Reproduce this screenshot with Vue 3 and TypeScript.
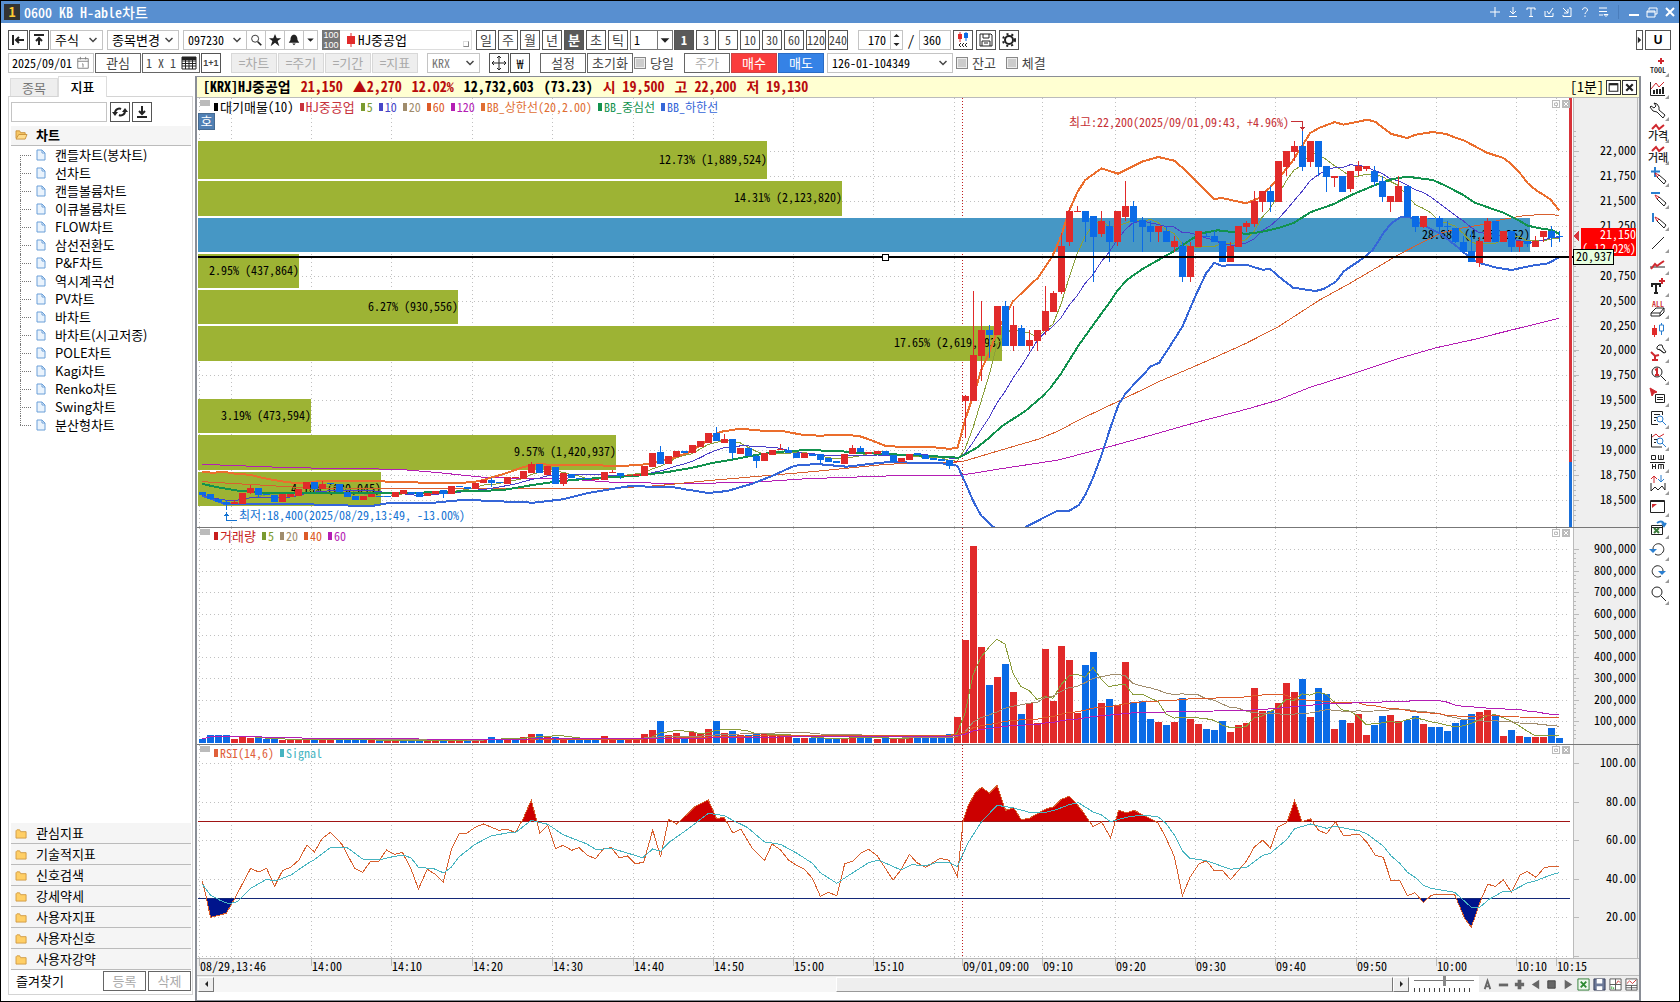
<script setup lang="ts">
import { ref } from 'vue'

type Dir = 'r' | 'b'
type Candle = [Dir, number, number, number?, number?]
type Pt = [number, number]
interface Shape { d: string; s?: string; f?: string; w?: number }
interface Tool { name: string; shapes: Shape[]; text?: string; ty?: number; ts?: number; tc?: string }

const UP = '#e12a2a'
const DOWN = '#0b6be6'
const INK = '#222'
const RED = '#d0282e'
const BLUE = '#2a7fd0'

const x0 = 202
const step = 8.03
const cx = (i: number) => Math.round(x0 + step * i)

/* Candle levels are kept in thirds of a pixel: direction, body top, body bottom, high, low. */
const friday: Candle[] = [
  ['b', 305, 315], ['b', 312, 328], ['b', 326, 337], ['b', 336, 343, 330, 360], ['r', 337, 343, 331], ['r', 310, 343],
  ['r', 294, 308, 285, 313], ['b', 294, 315, 294, 325], ['b', 312, 315], ['b', 315, 335], ['r', 312, 335], ['r', 312, 322],
  ['r', 298, 317], ['r', 276, 298], ['b', 276, 298, 276, 305], ['r', 282, 297, 274], ['b', 280, 283], ['b', 281, 305],
  ['b', 305, 320], ['b', 318, 330], ['r', 318, 330], ['r', 312, 320], ['b', 317, 320], ['b', 319, 322], ['r', 305, 320],
  ['r', 300, 312], ['b', 305, 312], ['b', 307, 320], ['r', 310, 318], ['r', 303, 312], ['b', 300, 312, 300, 323],
  ['r', 289, 312], ['b', 289, 292], ['b', 290, 297], ['r', 278, 297], ['r', 271, 278], ['b', 270, 280, 264, 290],
  ['b', 277, 280], ['r', 262, 282], ['r', 262, 265], ['r', 243, 266], ['r', 222, 248, 215], ['b', 222, 250],
  ['r', 228, 255], ['b', 230, 282], ['r', 250, 282, 250, 288], ['b', 252, 264], ['b', 263, 266], ['b', 265, 268],
  ['r', 267, 270], ['r', 247, 270], ['r', 246, 250, 240], ['b', 248, 258, 248, 268], ['r', 255, 258], ['r', 253, 258],
  ['r', 228, 258], ['r', 189, 230], ['b', 187, 222, 168], ['r', 198, 222], ['r', 183, 200], ['b', 183, 189],
  ['r', 165, 189], ['r', 153, 171], ['r', 129, 158], ['b', 129, 153, 111], ['r', 147, 158, 132],
  ['b', 147, 188, 147, 207], ['r', 173, 191], ['b', 173, 198], ['b', 198, 213, 194, 234], ['r', 189, 213],
  ['r', 180, 195], ['r', 177, 181, 162], ['b', 180, 189, 170], ['b', 189, 204], ['r', 189, 203], ['b', 192, 197],
  ['b', 193, 209, 193, 222], ['b', 204, 216], ['b', 214, 218], ['r', 192, 222], ['r', 174, 192, 165],
  ['b', 174, 186, 168], ['r', 186, 192], ['r', 183, 192], ['b', 182, 195], ['b', 194, 215], ['r', 203, 215],
  ['r', 191, 209], ['b', 189, 196], ['b', 194, 206], ['b', 203, 210], ['b', 207, 213], ['b', 210, 228, 210, 237],
  ['r', 213, 217],
]
const monday: Candle[] = [
  ['r', 887, 902, 885, 1013], ['r', 766, 902, 573], ['r', 690, 768, 603, 843], ['b', 690, 706, 675, 773],
  ['r', 618, 706], ['b', 618, 738, 603], ['r', 675, 738, 618, 752], ['b', 684, 738, 675], ['r', 720, 738, 690, 752],
  ['r', 690, 722, 690, 752], ['r', 633, 692, 558, 706], ['r', 579, 635, 573], ['r', 438, 575, 400, 582],
  ['r', 333, 425, 323, 438], ['r', 333, 336, 318], ['b', 333, 365, 333, 425], ['b', 348, 410, 348, 545],
  ['r', 363, 402, 333, 410], ['b', 378, 425, 363, 486], ['r', 333, 425, 333, 438], ['r', 318, 350, 243, 363],
  ['b', 318, 365, 303, 425], ['b', 360, 380, 350, 455], ['b', 378, 395, 363, 425], ['r', 378, 395, 378, 425],
  ['b', 394, 425, 378], ['r', 424, 440, 408, 455], ['b', 438, 530, 425, 545], ['r', 438, 530, 425, 545],
  ['r', 394, 440], ['b', 408, 412, 398], ['b', 408, 425, 394], ['b', 423, 485], ['r', 438, 485, 425],
  ['r', 378, 440], ['r', 370, 380, 363, 395], ['r', 303, 372, 273, 380], ['r', 273, 305, 273, 335],
  ['b', 273, 305, 258, 335], ['r', 183, 305], ['r', 153, 200, 153, 228], ['r', 138, 155, 123, 183],
  ['b', 138, 200, 93, 213], ['r', 123, 185, 123, 200], ['b', 123, 200, 123, 228], ['b', 198, 230, 198, 275],
  ['r', 228, 235, 228, 260], ['b', 228, 275], ['r', 213, 266, 213, 275], ['r', 198, 213, 183, 228],
  ['r', 198, 206, 198, 213], ['b', 212, 245, 198, 258], ['b', 243, 290, 228, 305], ['r', 288, 305, 288, 335],
  ['r', 258, 305, 228], ['b', 258, 350], ['b', 348, 380, 348, 395], ['r', 348, 380, 348, 385], ['b', 354, 357],
  ['b', 354, 380, 348, 395], ['b', 378, 381, 363, 395], ['b', 384, 425, 384, 430], ['b', 425, 455, 408],
  ['b', 454, 485, 394], ['r', 423, 488, 410, 500], ['r', 363, 425, 354], ['b', 363, 425], ['r', 394, 425],
  ['b', 394, 440, 394, 455], ['r', 423, 440, 423, 455], ['b', 423, 432, 423, 440], ['r', 424, 440, 408],
  ['r', 394, 410, 394, 425], ['b', 392, 413, 378, 440], ['b', 408, 411, 394, 425],
]

const candles = [
  ...friday.map(([d, t, b, h, l]) => ({ d, t: 390 + t / 3, b: 390 + b / 3, h: 390 + (h ?? t) / 3, l: 390 + (l ?? b) / 3 })),
  ...monday.map(([d, t, b, h, l]) => ({ d, t: 100 + t / 3, b: 100 + b / 3, h: 100 + (h ?? t) / 3, l: 100 + (l ?? b) / 3 })),
].map((c, i) => ({
  x: cx(i), fill: c.d === 'r' ? UP : DOWN,
  t: Math.round(c.t), bh: Math.max(1, Math.round(c.b) - Math.round(c.t)),
  h: Math.round(c.h), wh: Math.max(1, Math.round(c.l) - Math.round(c.h)),
  close: c.d === 'r' ? c.t : c.b,
}))

/* Volume heights, also in thirds of a pixel; positive closes up, negative closes down. */
const volumes = [
  -12, -24, -24, -24, 12, 20, 16, -14, -12, -12, 9, 9, 9, 8, -12, 9, 14, -12, -9, -9, -9, 9, -7, 9, 9, -8, -8, -8, 8, 8,
  -12, 8, 7, -8, 10, 10, -18, -12, 15, -9, 18, 27, -27, 18, -18, 16, -12, -12, -8, -8, 20, 9, -8, 9, 9, 27, 39, -66, 25,
  30, -20, 32, 30, 42, -66, 30, -36, 24, -24, -28, 27, 24, 24, 22, -14, 15, -14, -14, -12, -12, 16, 24, -16, -14, 12,
  -14, 15, 16, 18, -14, -15, -15, -20, -26, 77,
  308, 590, 287, -173, 197, -236, 152, -86, 119, 59, 281, 125, 290, 248, 89, -233, -272, 119, -131, 113, 242, -122, -125,
  -71, 62, -53, 62, -134, 71, 56, -41, -38, -65, 32, 53, 59, 164, 95, -95, 119, 179, 152, -191, 77, -164, -146, 41, -68,
  59, 86, 23, -53, -80, 83, 65, -68, -80, 56, -47, -47, -35, -59, -68, -86, 92, 98, -83, 20, -38, 20, -17, 17, 17, -44, -14,
]
const bars = volumes.map((v, i) => {
  const h = Math.round(Math.abs(v) / 3)
  return { x: cx(i) - 3, y: 743 - h, h, fill: v > 0 ? UP : DOWN }
})

function average(values: number[], n: number, y: (v: number) => number) {
  return values
    .map((_, i) => {
      const part = values.slice(Math.max(0, i - n + 1), i + 1)
      return `${cx(i)},${y(part.reduce((a, b) => a + b, 0) / part.length).toFixed(1)}`
    })
    .join(' ')
}
const closes = candles.map((c) => c.close)
const sma5 = average(closes, 5, (v) => v)
const sma10 = average(closes, 10, (v) => v)
const sizes = volumes.map((v) => Math.abs(v) / 3)
const volumeLines = [
  { n: 5, c: '#8a9b3a' }, { n: 20, c: '#a08c6c' }, { n: 40, c: '#dc5a28' }, { n: 60, c: '#b41eb4' },
].map((l) => ({ c: l.c, p: average(sizes, l.n, (v) => 743 - v) }))

function pts(list: string): Pt[] {
  return list.trim().split(/\s+/).map((p) => p.split(',').map(Number) as Pt)
}
function line(left: string, right: string, kx = 2.45, yl = 390, yr = 100) {
  const a = left ? pts(left).map(([x, y]) => `${(190 + x / 2.01).toFixed(1)},${(yl + y / 3).toFixed(1)}`) : []
  const b = pts(right).map(([x, y]) => `${(940 + x / kx).toFixed(1)},${(yr + y / 3).toFixed(1)}`)
  return [...a, ...b].join(' ')
}

const priceLines = [
  { c: '#b41eb4', w: 1, p: line('25,223 200,233 420,238 500,248 590,262 700,266 760,267 850,277 1000,281 1140,276 1240,266 1400,258 1500,256', '0,1126 50,1126 150,1106 290,1080 430,1035 510,1008 625,968 750,928 829,900 907,862 1020,818 1125,775 1216,743 1310,718 1400,690 1517,655') },
  { c: '#d8602e', w: 1, p: line('25,275 150,286 240,294 400,295 600,296 830,296 940,287 1040,272 1110,263 1250,245 1400,223 1500,217', '43,1086 60,1083 150,1050 240,1018 290,993 340,960 440,902 540,843 650,785 750,730 829,680 930,600 1000,553 1060,510 1125,463 1225,400 1282,383 1320,376 1380,358 1430,347 1480,343 1517,346') },
  { c: '#8aa03a', w: 1, p: sma5 },
  { c: '#4b3fc8', w: 1, p: sma10 },
  { c: '#eb6e2d', w: 2, p: line('25,245 45,248 70,246 95,252 120,254 150,265 180,273 205,278 235,279 260,273 330,274 380,274 440,277 500,279 550,278 580,274 605,263 635,250 670,231 700,222 740,226 800,225 860,228 905,225 940,216 965,207 1000,189 1030,162 1050,138 1068,125 1105,116 1150,122 1190,123 1230,134 1265,137 1310,134 1345,138 1370,151 1397,167 1430,171 1490,172', '0,1043 22,1047 43,1043 62,957 75,910 82,890 101,810 121,757 141,690 170,625 178,605 205,573 240,533 275,470 297,408 317,330 337,275 356,240 396,205 436,221 495,185 535,171 574,182 594,203 633,251 671,297 691,294 750,310 780,295 809,262 829,235 860,190 890,132 907,99 930,83 967,66 988,74 1047,59 1066,65 1106,102 1145,114 1165,104 1207,96 1240,102 1260,112 1285,122 1340,158 1380,174 1400,192 1420,218 1440,250 1462,272 1478,284 1497,300 1517,331') },
  { c: '#12924e', w: 2, p: line('25,282 60,293 100,303 150,308 200,309 300,308 440,309 520,305 580,303 630,300 680,287 720,278 770,270 830,263 900,257 960,246 1010,233 1050,219 1100,206 1140,194 1180,186 1240,180 1310,184 1350,189 1430,194 1500,199', '0,1070 45,1073 62,1063 90,1043 121,1013 150,980 210,932 250,890 270,865 297,820 340,735 396,640 417,605 437,568 460,538 495,508 535,480 574,453 613,420 640,400 680,391 711,395 750,402 790,395 829,384 868,368 907,337 965,312 1008,285 1066,255 1110,237 1145,230 1207,240 1240,258 1282,285 1310,308 1380,338 1419,362 1440,377 1478,387 1500,390 1517,402') },
  { c: '#3566d8', w: 2, p: line('25,318 45,328 70,342 150,342 180,341 235,343 330,347 365,348 400,339 440,338 490,338 540,331 560,329 600,333 660,336 690,338 750,328 800,309 860,294 890,287 930,291 965,290 1000,299 1042,309 1080,303 1130,281 1170,258 1215,227 1260,222 1320,230 1365,222 1400,217 1480,218', '0,1090 25,1092 43,1098 62,1148 82,1205 101,1247 131,1281 170,1310 210,1281 285,1234 317,1232 340,1215 356,1185 376,1130 396,1065 417,985 437,915 455,880 476,852 496,828 515,800 537,788 560,745 594,680 625,590 652,520 672,488 690,497 750,494 790,509 809,507 840,540 865,563 920,573 940,567 970,545 990,513 1040,472 1060,450 1086,400 1106,370 1130,350 1150,350 1175,370 1204,388 1225,400 1265,438 1300,475 1325,490 1360,502 1400,510 1450,497 1490,490 1517,472') },
]

const rsi = line('25,723 33,773 41,832 57,826 73,820 90,775 106,730 122,685 138,696 154,685 170,739 186,692 203,681 219,660 235,615 250,636 266,595 282,577 305,612 331,685 347,697 363,664 379,664 395,630 411,643 427,637 445,690 459,747 477,688 492,702 509,727 525,630 541,580 557,579 573,562 590,552 621,571 638,568 654,578 670,535 686,480 703,579 719,556 735,626 750,616 767,631 782,623 798,645 815,656 831,626 847,623 863,654 879,648 895,671 912,667 930,570 946,650 962,538 978,552 1000,522 1015,500 1042,480 1058,535 1074,533 1091,579 1107,567 1130,625 1155,661 1170,612 1187,630 1203,660 1219,676 1235,688 1251,715 1267,769 1284,757 1300,768 1316,671 1332,664 1348,640 1364,628 1381,647 1413,720 1429,690 1446,643 1461,668 1479,682', '0,355 20,361 39,410 52,240 62,200 78,160 93,142 111,159 128,136 147,211 165,203 182,239 200,235 237,207 255,200 272,178 289,169 305,190 320,215 343,260 362,246 382,293 400,211 418,219 435,211 488,248 505,290 525,350 543,467 560,412 580,372 597,362 614,392 633,392 651,419 687,362 704,321 723,300 740,325 757,261 777,248 794,181 811,245 830,236 848,271 866,281 886,245 903,286 940,284 957,308 975,346 993,352 1010,421 1030,422 1047,467 1064,458 1083,488 1100,466 1115,463 1153,464 1175,535 1190,562 1213,475 1227,433 1244,439 1262,419 1280,457 1299,405 1315,394 1335,412 1353,384 1370,379 1387,379', 2.24, 640, 740)
const signal = line('25,733 41,765 62,782 78,791 95,785 122,745 154,718 172,723 203,705 235,672 250,659 282,623 315,622 347,657 379,660 411,649 430,645 445,655 459,682 490,686 510,699 525,682 541,650 573,613 605,588 640,578 655,577 686,541 719,553 750,584 798,612 815,628 850,626 910,653 930,627 946,634 962,608 1000,568 1042,520 1074,527 1091,541 1120,562 1155,606 1187,613 1220,640 1251,670 1267,698 1300,730 1316,714 1364,668 1384,660 1429,690 1450,674 1479,677 1500,668', '0,368 22,368 39,380 62,310 93,245 128,196 165,204 200,217 230,219 260,209 289,194 310,188 343,216 362,225 382,245 418,232 450,225 488,230 505,248 525,285 543,333 560,355 597,362 651,388 687,382 723,346 740,340 777,298 794,266 830,252 866,265 886,259 940,273 957,282 993,318 1010,347 1030,370 1047,397 1064,412 1083,436 1100,445 1153,457 1190,502 1208,503 1230,478 1262,454 1280,454 1315,429 1335,422 1370,404 1387,398', 2.24, 640, 740)

const profile = [
  { y: 141, h: 38, r: 767, t: '12.73% (1,889,524)' },
  { y: 181, h: 35, r: 842, t: '14.31% (2,123,820)' },
  { y: 218, h: 34, r: 1530, t: '28.68% (4,257,252)', main: true },
  { y: 254, h: 34, r: 299, t: '2.95% (437,864)' },
  { y: 290, h: 34, r: 458, t: '6.27% (930,556)' },
  { y: 326, h: 35, r: 1002, t: '17.65% (2,619,893)' },
  { y: 399, h: 34, r: 311, t: '3.19% (473,594)' },
  { y: 435, h: 35, r: 616, t: '9.57% (1,420,937)' },
  { y: 472, h: 34, r: 381, t: '4.18% (620,045)' },
]

const priceTicks = Array.from({ length: 15 }, (_, i) => {
  const v = 22000 - i * 250
  return { y: Math.round(151 + i * 24.93), t: v === 21000 ? '' : v.toLocaleString('en-US') }
})
const priceMinor = Array.from({ length: 79 }, (_, i) => Math.round(131 + i * 4.99))
const volumeTicks = Array.from({ length: 9 }, (_, i) => ({ y: Math.round(549 + i * 21.5), t: `${9 - i}00,000` }))
const volumeMinor = Array.from({ length: 45 }, (_, i) => Math.round(549 + i * 4.3))
const rsiTicks = [100, 80, 60, 40, 20, 0].map((v, i) => ({ y: Math.round(763 + i * 38.6), t: v ? v.toFixed(2) : '' }))

const gridX = [199, 231, 311, 391, 472, 552, 633, 713, 793, 873, 954, 1042, 1115, 1195, 1275, 1356, 1436, 1516, 1556]
const timeTicks = [
  { x: 199, t: '08/29,13:46' }, { x: 311, t: '14:00' }, { x: 391, t: '14:10' }, { x: 472, t: '14:20' },
  { x: 552, t: '14:30' }, { x: 633, t: '14:40' }, { x: 713, t: '14:50' }, { x: 793, t: '15:00' },
  { x: 873, t: '15:10' }, { x: 962, t: '09/01,09:00' }, { x: 1042, t: '09:10' }, { x: 1115, t: '09:20' },
  { x: 1195, t: '09:30' }, { x: 1275, t: '09:40' }, { x: 1356, t: '09:50' }, { x: 1436, t: '10:00' },
  { x: 1516, t: '10:10' }, { x: 1556, t: '10:15' },
]

const legends = {
  price: [
    { c: '#000', t: '대기매물(10)', wide: true }, { c: '#c8323c', t: 'HJ중공업', wide: true }, { c: '#7a9a30', t: '5' },
    { c: '#4646c8', t: '10' }, { c: '#a08c6c', t: '20' }, { c: '#dc5a28', t: '60' }, { c: '#b41eb4', t: '120' },
    { c: '#e06e32', t: 'BB_상한선(20,2.00)' }, { c: '#12924e', t: 'BB_중심선' }, { c: '#3566d8', t: 'BB_하한선' },
  ],
  volume: [
    { c: '#c81e1e', t: '거래량', wide: true }, { c: '#7a9a30', t: '5' }, { c: '#a08c6c', t: '20' },
    { c: '#dc5a28', t: '40' }, { c: '#b41eb4', t: '60' },
  ],
  rsi: [{ c: '#e0603a', t: 'RSI(14,6)' }, { c: '#46b4c0', t: 'Signal' }],
}

const tree = ['캔들차트(봉차트)', '선차트', '캔들볼륨차트', '이큐볼륨차트', 'FLOW차트', '삼선전환도', 'P&F차트', '역시계곡선',
  'PV차트', '바차트', '바차트(시고저종)', 'POLE차트', 'Kagi차트', 'Renko차트', 'Swing차트', '분산형차트']
const groups = ['관심지표', '기술적지표', '신호검색', '강세약세', '사용자지표', '사용자신호', '사용자강약']
const periods = ['일', '주', '월', '년', '분', '초', '틱']
const minutes = ['1', '3', '5', '10', '30', '60', '120', '240']
const syncs = ['=차트', '=주기', '=기간', '=지표']

const period = ref('분')
const minute = ref('1')
const zoomLevel = ref(50)

const titleIcons: { name: string; d: string }[] = [
  { name: '추가', d: 'M6 1v10M1 6h10' },
  { name: '내리기', d: 'M6 1v6M3 5l3 3 3-3M2 10.500h8' },
  { name: '글꼴', d: 'M2 4V2h8v2M6 2v8M4 10.500h4' },
  { name: '내보내기', d: 'M4 5l2 3 4-6M2 5v5.500h8V7' },
  { name: '가져오기', d: 'M2 2l5 5M7 3v4H3M8 2h2v8.500H2V9' },
  { name: '도움말', d: 'M3.500 4c0-3 5-3 5 0 0 2-2.500 2-2.500 4M6 9.500v1.500' },
  { name: '메뉴', d: 'M2 2h8M2 5.500h8M2 9h4M7 8.500h4l-2 2z' },
]

const mag = 'M4 8a5 5 0 1 0 10 0a5 5 0 1 0-10 0M13 12l5 5'
const pen: Shape[] = [{ d: 'M9 11l2-2 7 6-2 3z', s: INK, w: 1 }, { d: 'M7 7l4 2-2 2z', s: RED, w: 1 }]
const tools: Tool[] = [
  { name: '도구', text: 'TOOL', ty: 17, ts: 8, shapes: [{ d: 'M13 2v6M10 5h6', s: RED, w: 2 }] },
  { name: '차트 유형', shapes: [{ d: 'M2.500 4v13.500H17', s: INK, w: 1 }, { d: 'M6 16v-4M9 16v-5M12 16v-5M15 16V9', s: INK, w: 2 }, { d: 'M3 11l5-6 3 4 5-5', s: RED, w: 1 }] },
  { name: '설정', shapes: [{ d: 'M6 3l3 1 2 3v3l6 5-2 3-6-6-4-1-3-4 1-1 3 2 2-2z', s: INK, w: 1 }] },
  { name: '가격', text: '가격', ty: 18, ts: 11, shapes: [{ d: 'M4 7l4-4 3 4 5-4', s: RED, w: 2 }] },
  { name: '거래', text: '거래', ty: 18, ts: 11, shapes: [{ d: 'M4 7l4-4 3 4 5-4', s: RED, w: 2 }] },
  { name: '십자선', shapes: [{ d: 'M7 1v10M3 5.500h9', s: BLUE, w: 2 }, ...pen] },
  { name: '수평선', shapes: [{ d: 'M3 5h9', s: BLUE, w: 2 }, ...pen] },
  { name: '수직선', shapes: [{ d: 'M5 3v9', s: BLUE, w: 2 }, ...pen] },
  { name: '추세선', shapes: [{ d: 'M4 17L16 5', s: INK, w: 1 }] },
  { name: '회귀선', shapes: [{ d: 'M2 13h15', s: INK, w: 1 }, { d: 'M3 15l4-5 2 2 4-3 3-2', s: RED, w: 2 }] },
  { name: '문자', shapes: [{ d: 'M4 11V8h8v3M8 8v9M6 17h4', s: INK, w: 2 }, { d: 'M14 2v6M11 5h6', s: RED, w: 2 }] },
  { name: '모두 지우기', text: 'ALL', ty: 9, ts: 8, tc: RED, shapes: [{ d: 'M3 15l5-5h8l-4 5zM3 15v3h9l4-4v-4M12 15v3', s: INK, w: 1 }] },
  { name: '봉', shapes: [{ d: 'M6.500 5v12', s: UP, w: 1 }, { d: 'M4 8h5v7H4z', f: UP }, { d: 'M13.500 3v2M13.500 11v4M11.500 5h4v6h-4z', s: BLUE, w: 1 }] },
  { name: '패턴 설정', shapes: [{ d: 'M3 10l4 4 4-1M7 13v5M4 18h6', s: RED, w: 2 }, { d: 'M9 5l2-2h3l1 3 3 4-2 1-4-3-3-1zM11 7l5 4', s: INK, w: 1 }] },
  { name: '1배 보기', shapes: [{ d: mag, s: INK, w: 1 }, { d: 'M7 6l2-1v6M7 11h4', s: RED, w: 2 }] },
  { name: '선택 정보', shapes: [{ d: 'M2 2l7 4-3 1-2 3z', s: RED, f: RED, w: 1 }, { d: 'M7.500 8.500h9v8h-9zM9 11.500h6M9 13.500h6', s: INK, w: 1 }] },
  { name: '종목 검색', shapes: [{ d: 'M14.500 7V3.500h-11v13H10M6 6.500h6M6 9.500h3M6 12.500h2', s: INK, w: 1 }, { d: 'M9 11a3 3 0 1 0 6 0a3 3 0 1 0-6 0M14 13l4 4', s: BLUE, w: 1 }] },
  { name: '차트 검색', shapes: [{ d: 'M3.500 4v13H14M6 9.500h3M6 12.500h2', s: INK, w: 1 }, { d: 'M4 7l4-3 3 3 5-3', s: RED, w: 1 }, { d: 'M9 11a3 3 0 1 0 6 0a3 3 0 1 0-6 0M14 13l4 4', s: BLUE, w: 1 }] },
  { name: '주기 변경', shapes: [{ d: 'M3.500 3.500h4v4h-4zM10.500 3v4.500h5V3M13 3v4M2 10.500h15M4.500 12v5M7.500 12v5M4 14.500h3M10.500 17v-4.500h5V17M13 13v4', s: INK, w: 1 }] },
  { name: '신호', shapes: [{ d: 'M6 9V2M3 5l3-3 3 3', s: RED, w: 1 }, { d: 'M13 1v7M10 5l3 3 3-3', s: BLUE, w: 1 }, { d: 'M3 9v8l4-4 3 3 4-4 3 4V9', s: INK, w: 1 }] },
  { name: '창', shapes: [{ d: 'M2.500 4.500h14v12h-14zM3 5.500h14', s: INK, w: 1 }, { d: 'M4 8h5l-5 4z', f: RED }] },
  { name: '엑셀', shapes: [{ d: 'M3.500 7.500h11v9h-11zM3 9.500h11', s: INK, w: 1 }, { d: 'M6 10l5 5M11 10l-5 5', s: '#3a7a3a', w: 2 }, { d: 'M9 5c4-3 7-1 7 2M14 5l2 3 2-3', s: BLUE, w: 2 }] },
  { name: '실행 취소', shapes: [{ d: 'M5 9c0-4 4-6 7-5s5 5 3 8-5 4-8 2', s: INK, w: 1 }, { d: 'M1 9h8l-4 4z', f: BLUE }] },
  { name: '다시 실행', shapes: [{ d: 'M15 9c0-4-4-6-7-5s-5 5-3 8 5 4 8 2', s: INK, w: 1 }, { d: 'M10 9h8l-4 4z', f: BLUE }] },
  { name: '확대', shapes: [{ d: mag, s: INK, w: 1 }] },
]

const footIcons: { name: string; shapes: Shape[] }[] = [
  { name: '자동', shapes: [{ d: 'M4 12L7 3l3 9M5 9h4', s: '#666', w: 2 }] },
  { name: '축소', shapes: [{ d: 'M2 6h10v3H2z', f: '#666' }] },
  { name: '확대', shapes: [{ d: 'M5 2h4v3h3v4H9v3H5V9H2V5h3z', f: '#666' }] },
  { name: '이전', shapes: [{ d: 'M11 2v10L3 7z', f: '#666' }] },
  { name: '정지', shapes: [{ d: 'M3 3h8v8H3z', f: '#666', s: '#444', w: 1 }] },
  { name: '다음', shapes: [{ d: 'M4 2v10l8-5z', f: '#666' }] },
  { name: '엑셀 저장', shapes: [{ d: 'M1 1h12v12H1z', f: '#eef8ee', s: '#2d7a32', w: 1 }, { d: 'M4 4l6 6M10 4l-6 6', s: '#2d8a32', w: 2 }] },
  { name: '저장', shapes: [{ d: 'M1 1h12v12H1z', f: '#6d7a99', s: '#333a55', w: 1 }, { d: 'M4 1h6v5H4zM4 9h6v4H4z', f: '#fff' }] },
  { name: '분할 차트', shapes: [{ d: 'M1 1h12v12H1zM7 1v12M1 7h12', f: '#fff', s: '#555', w: 1 }, { d: 'M8 6l2-3 2 2', s: '#c33', w: 1 }, { d: 'M3 12V9M5 12v-2', s: '#3a3', w: 1 }] },
  { name: '표 차트', shapes: [{ d: 'M1 1h12v12H1zM1 8h12M1 10.500h12M7 8v5', f: '#fff', s: '#555', w: 1 }, { d: 'M2 6l3-3 3 3 4-4', s: '#c33', w: 1 }] },
]
</script>

<template>
  <div class="window">
    <header class="titlebar">
      <span class="badge">1</span>
      <h1>0600 KB H-able차트</h1>
      <div class="title-icons">
        <button v-for="t in titleIcons" :key="t.name" :aria-label="t.name">
          <svg viewBox="0 0 12 12"><path :d="t.d" /></svg>
        </button>
        <i class="split"></i>
        <button aria-label="최소화"><svg viewBox="0 0 12 12"><path class="thick" d="M1 9h10" /></svg></button>
        <button aria-label="복원"><svg viewBox="0 0 12 12"><path d="M3 4V2h8v6H9M1 5h8v6H1zM1 6h8" /></svg></button>
        <button aria-label="닫기"><svg viewBox="0 0 12 12"><path class="thick" d="M2 2l8 8M10 2l-8 8" /></svg></button>
      </div>
    </header>

    <div class="bar first">
      <button class="sq" aria-label="접기"><svg viewBox="0 0 16 16"><path class="k2" d="M3 3v10M14 8H6M9 5L6 8l3 3" /></svg></button>
      <button class="sq" aria-label="위로"><svg viewBox="0 0 16 16"><path class="k2" d="M3 3h10M8 13V6M5 9l3-3 3 3" /></svg></button>
      <select class="w-kind" aria-label="시장"><option>주식</option></select>
      <select class="w-change" aria-label="종목변경"><option>종목변경</option></select>
      <div class="joined">
        <select class="w-code" aria-label="종목코드"><option>097230</option></select>
        <button aria-label="검색"><svg viewBox="0 0 16 16"><path class="k" d="M3 6.500a4 4 0 1 0 8 0a4 4 0 1 0-8 0" /><path class="k2" d="M10 10l4 4" /></svg></button>
        <button aria-label="관심등록"><svg viewBox="0 0 16 16"><path class="kf" d="M8 1l2 5h5l-4 3 2 6-5-4-5 4 2-6-4-3h5z" /></svg></button>
        <button aria-label="알림"><svg viewBox="0 0 16 16"><path class="kf" d="M8 2c3 0 4 3 4 6l2 3H2l2-3c0-3 1-6 4-6zM6 12h4l-2 2z" /></svg></button>
        <button class="narrow" aria-label="더보기"><svg viewBox="0 0 16 16"><path class="kf" d="M4 6h8l-4 4z" /></svg></button>
      </div>
      <span class="hundred"><b>100</b><b>100</b></span>
      <span class="stock"><svg viewBox="0 0 10 16"><path :stroke="UP" d="M5 1v14" /><path :fill="UP" d="M1 4h8v8H1z" /></svg>HJ중공업<i></i></span>
      <div class="gapped">
        <button v-for="p in periods" :key="p" class="sq" :class="{ on: p === period }" @click="period = p">{{ p }}</button>
      </div>
      <div class="combo"><input value="1" aria-label="분 단위" /><button aria-label="목록"><svg viewBox="0 0 16 16"><path class="kf" d="M3 6h10l-5 5z" /></svg></button></div>
      <div class="gapped mins">
        <button v-for="m in minutes" :key="m" class="sq" :class="{ on: m === minute }" @click="minute = m">{{ m }}</button>
      </div>
      <div class="spin"><input value="170" aria-label="표시 개수" /><span><svg viewBox="0 0 10 18"><path class="kf" d="M2 6h6L5 3zM2 12h6l-3 3z" /></svg></span></div>
      <span class="slash">/</span>
      <input class="total" value="360" aria-label="전체 개수" />
      <div class="trio">
        <button class="sq" aria-label="봉 이동"><svg viewBox="0 0 16 16"><path :stroke="UP" d="M5 0v10" /><path :fill="UP" d="M3 2h4v5H3z" /><path :stroke="DOWN" d="M11 0v9" /><path :fill="DOWN" d="M9 1h4v5H9z" /><path class="k" d="M6 11l-2 2 2 2M9 11l-2 2 2 2M12 11l-2 2 2 2" /></svg></button>
        <button class="sq" aria-label="저장"><svg viewBox="0 0 16 16"><path class="k" d="M2 2h11l1 1v11H2zM5 2v4h6V2M4 14V9h8v5M6 11h4" /></svg></button>
        <button class="sq" aria-label="환경설정"><svg viewBox="0 0 16 16"><circle class="gear" cx="8" cy="8" r="6" /><circle class="k2" cx="8" cy="8" r="4" /></svg></button>
      </div>
      <div class="far">
        <button class="slim" aria-label="펼치기"><svg viewBox="0 0 6 12"><path class="kf" d="M1 2l4 4-4 4z" /></svg></button>
        <button class="u">U</button>
      </div>
    </div>

    <div class="bar second">
      <label class="date"><input value="2025/09/01" aria-label="날짜" /><svg viewBox="0 0 16 16"><path class="g" d="M2 3h12v11H2zM2 6h12M5 1v3M11 1v3M7 9h1v4" /></svg></label>
      <button class="txt dark">관심</button>
      <button class="layout">1 X 1<svg viewBox="0 0 16 14"><path class="k" d="M1 1h14v12H1zM1 5h14M1 7.500h14M1 10h14M4.500 3v10M8 3v10M11.500 3v10" /><path class="kf" d="M1 1h14v3H1z" /></svg></button>
      <button class="sq one">1+1</button>
      <div class="syncs"><button v-for="s in syncs" :key="s" class="txt off" disabled>{{ s }}</button></div>
      <select class="w-krx" aria-label="거래소"><option>KRX</option></select>
      <div class="pair">
        <button class="sq" aria-label="이동"><svg viewBox="0 0 16 16"><path class="k" d="M8 1v14M1 8h14M6 3l2-2 2 2M6 13l2 2 2-2M3 6L1 8l2 2M13 6l2 2-2 2" /></svg></button>
        <button class="sq won">₩</button>
      </div>
      <div class="pair"><button class="txt">설정</button><button class="txt">초기화</button></div>
      <label class="check day"><input type="checkbox" />당일</label>
      <div class="pair orders"><button class="txt pale">주가</button><button class="txt buy">매수</button><button class="txt sell">매도</button></div>
      <select class="w-acct" aria-label="계좌번호"><option>126-01-104349</option></select>
      <label class="check"><input type="checkbox" />잔고</label>
      <label class="check"><input type="checkbox" />체결</label>
    </div>

    <main>
      <aside class="side">
        <div class="tabs"><button>종목</button><button class="cur">지표</button></div>
        <div class="side-body">
          <div class="find">
            <input aria-label="지표 검색" />
            <button class="sq" aria-label="새로고침"><svg viewBox="0 0 16 16"><path class="k2" d="M3 9c0-4 4-5 6-4M13 7c0 4-4 5-6 4" /><path class="kf" d="M0 8h6l-3 4zM10 8h6l-3-4z" /></svg></button>
            <button class="sq" aria-label="내려받기"><svg viewBox="0 0 16 16"><path class="k2" d="M3 13h10M8 2v7M5 7l3 3 3-3" /></svg></button>
          </div>
          <h2><svg viewBox="0 0 14 12"><path d="M1 10V2h4l1 2h5v2" fill="#f7c765" stroke="#c8913a" /><path d="M1 11l3-5h9l-2 5z" fill="#ffdc8c" stroke="#c8913a" /></svg>차트</h2>
          <ul class="tree">
            <li v-for="t in tree" :key="t">
              <svg viewBox="0 0 10 12"><path d="M1 1h5l3 3v7H1zM6 1v3h3" fill="#eaf3fc" stroke="#6a9fd8" /></svg>
              <a href="#">{{ t }}</a>
            </li>
          </ul>
          <ul class="groups">
            <li v-for="g in groups" :key="g">
              <svg viewBox="0 0 14 12"><path d="M1 11V3l1-1h3l1 2h6v7z" fill="#ffcf66" stroke="#d09a44" /></svg>
              <a href="#">{{ g }}</a>
            </li>
          </ul>
          <div class="fav"><span>즐겨찾기</span><button class="txt pale">등록</button><button class="txt pale">삭제</button></div>
        </div>
      </aside>

      <section class="chart">
        <header class="quote">
          <b>[KRX]HJ중공업</b>
          <b class="red">21,150</b><b class="red">▲2,270</b><b class="red">12.02%</b>
          <b>12,732,603</b><b>(73.23)</b>
          <b class="red">시 19,500</b><b class="red">고 22,200</b><b class="red">저 19,130</b>
          <span class="unit">[1분]</span>
          <div class="frame-buttons">
            <button aria-label="최대화"><svg viewBox="0 0 12 12"><path class="k" d="M2 2.500h8v7H2z" /><path class="k2" d="M2 3h8" /></svg></button>
            <button aria-label="닫기"><svg viewBox="0 0 12 12"><path class="k2" d="M3 3l6 6M9 3l-6 6" /></svg></button>
          </div>
        </header>

        <div class="panel">
          <svg class="plot" viewBox="197 98 1442 429">
            <rect x="1573" y="98" width="66" height="429" fill="#efefef" />
            <g class="grid">
              <path v-for="x in gridX" :key="x" :d="`M${x}.5 98V527`" />
              <path v-for="t in priceTicks" :key="t.y" :d="`M198 ${t.y}.5H1569`" />
            </g>
            <path class="session" d="M962.5 98V527" />
            <g v-for="p in profile" :key="p.t">
              <rect x="198" :y="p.y" :width="p.r - 198" :height="p.h" :fill="p.main ? '#4697c5' : '#9db334'" />
              <text :x="p.r" :y="Math.floor(p.y + p.h / 2) + 4" text-anchor="end">{{ p.t }}</text>
            </g>
            <polyline v-for="l in priceLines" :key="l.p" :points="l.p" fill="none" :stroke="l.c" :stroke-width="l.w" />
            <g v-for="c in candles" :key="c.x" :fill="c.fill">
              <rect :x="c.x" :y="c.h" width="1" :height="c.wh" />
              <rect :x="c.x - 3" :y="c.t" width="7" :height="c.bh" />
            </g>
            <path d="M198 257H1573" stroke="#000" stroke-width="2" />
            <rect x="882.500" y="254.500" width="6" height="6" fill="#fff" stroke="#000" />
            <text x="1289" y="127" text-anchor="end" fill="#c62f35">최고:22,200(2025/09/01,09:43, +4.96%)</text>
            <path d="M1291 121.500H1302.500V128" fill="none" stroke="#c62f35" />
            <path d="M1300 127h5l-2.500 4z" fill="#c62f35" />
            <text x="239" y="520" fill="#1473d2">최저:18,400(2025/08/29,13:49, -13.00%)</text>
            <path d="M226.500 512V520.500H237" fill="none" stroke="#1473d2" />
            <path d="M224 516h5l-2.500-4z" fill="#1473d2" />
            <path d="M1573.500 98V527" stroke="#bbb" />
            <g stroke="#bbb">
              <path v-for="y in priceMinor" :key="y" :d="`M1573 ${y}.5h3`" />
              <path v-for="t in priceTicks" :key="t.y" :d="`M1573 ${t.y}.5h6`" />
            </g>
            <rect x="1569" y="98" width="3" height="364" fill="#d8343a" />
            <rect x="1569" y="462" width="3" height="65" fill="#1a6fd8" />
            <text v-for="t in priceTicks" :key="t.y" x="1636" :y="t.y + 4" text-anchor="end">{{ t.t }}</text>
            <path d="M1573 236l6-5v10z" fill="#d8343a" />
            <rect x="1581" y="228" width="55" height="28" fill="#f00" />
            <text x="1636" y="239" text-anchor="end" fill="#fff">21,150</text>
            <text x="1636" y="253" text-anchor="end" fill="#fff">( 12.02%)</text>
            <rect x="1573.500" y="249.500" width="40" height="15" fill="#e6ffe0" stroke="#000" />
            <text x="1612" y="261" text-anchor="end">20,937</text>
            <path d="M1637.500 98V527" stroke="#bbb" />
          </svg>
          <div class="legend">
            <i class="grip"></i>
            <span v-for="l in legends.price" :key="l.t" :class="{ wide: l.wide }" :style="{ color: l.c }">{{ l.t }}</span>
          </div>
          <span class="ho">호</span>
          <div class="mini"><button aria-label="확대"><svg viewBox="0 0 8 8"><path d="M2.500 3h3v2.500h-3z" stroke="#bbb" /></svg></button><button class="x" aria-label="닫기"><svg viewBox="0 0 8 8"><path d="M2 2l4 4M6 2L2 6" stroke="#fff" /></svg></button></div>
        </div>

        <div class="panel">
          <svg class="plot" viewBox="197 527 1442 217">
            <rect x="1573" y="527" width="66" height="217" fill="#efefef" />
            <g class="grid">
              <path v-for="x in gridX" :key="x" :d="`M${x}.5 528V744`" />
              <path v-for="t in volumeTicks" :key="t.y" :d="`M198 ${t.y}.5H1569`" />
            </g>
            <path class="session" d="M962.5 528V744" />
            <rect v-for="b in bars" :key="b.x" :x="b.x" :y="b.y" width="7" :height="b.h" :fill="b.fill" />
            <polyline v-for="l in volumeLines" :key="l.c" :points="l.p" fill="none" :stroke="l.c" />
            <g stroke="#bbb">
              <path d="M1573.500 527V744M1637.500 527V744" />
              <path v-for="y in volumeMinor" :key="y" :d="`M1573 ${y}.5h3`" />
              <path v-for="t in volumeTicks" :key="t.y" :d="`M1573 ${t.y}.5h6`" />
            </g>
            <text v-for="t in volumeTicks" :key="t.y" x="1636" :y="t.y + 4" text-anchor="end">{{ t.t }}</text>
            <path d="M197 527.500H1639" stroke="#777" />
          </svg>
          <div class="legend">
            <i class="grip"></i>
            <span v-for="l in legends.volume" :key="l.t" :class="{ wide: l.wide }" :style="{ color: l.c }">{{ l.t }}</span>
          </div>
          <div class="mini"><button aria-label="확대"><svg viewBox="0 0 8 8"><path d="M2.500 3h3v2.500h-3z" stroke="#bbb" /></svg></button><button class="x" aria-label="닫기"><svg viewBox="0 0 8 8"><path d="M2 2l4 4M6 2L2 6" stroke="#fff" /></svg></button></div>
        </div>

        <div class="panel">
          <svg class="plot" viewBox="197 744 1442 232">
            <defs>
              <clipPath id="over"><rect x="197" y="744" width="1376" height="77" /></clipPath>
              <clipPath id="under"><rect x="197" y="899" width="1376" height="57" /></clipPath>
            </defs>
            <rect x="1573" y="744" width="66" height="232" fill="#efefef" />
            <rect x="197" y="958" width="1442" height="18" fill="#efefef" />
            <g class="grid">
              <path v-for="x in gridX" :key="x" :d="`M${x}.5 745V958`" />
              <path v-for="t in rsiTicks" :key="t.y" :d="`M198 ${t.y}.5H1569`" />
            </g>
            <path class="session" d="M962.5 745V958" />
            <polygon :points="`202,821 ${rsi} 1559,821`" fill="#cc0000" clip-path="url(#over)" />
            <polygon :points="`202,899 ${rsi} 1559,899`" fill="#00148c" clip-path="url(#under)" />
            <path d="M198 821.500H1570" stroke="#a01414" />
            <path d="M198 898.500H1570" stroke="#142878" />
            <polyline :points="rsi" fill="none" stroke="#d8602e" />
            <polyline :points="signal" fill="none" stroke="#46b4c0" />
            <g stroke="#bbb">
              <path d="M1573.500 744V958M1637.500 744V958M197 958.500H1639M197 975.500H1639" />
              <path v-for="t in rsiTicks" :key="t.y" :d="`M1573 ${t.y}.5h6`" />
              <path v-for="t in timeTicks" :key="t.x" :d="`M${t.x}.5 958v8`" />
            </g>
            <text v-for="t in rsiTicks" :key="t.y" x="1636" :y="t.y + 4" text-anchor="end">{{ t.t }}</text>
            <text v-for="t in timeTicks" :key="t.x" :x="t.x + 1" y="971">{{ t.t }}</text>
            <path d="M197 744.500H1639" stroke="#777" />
          </svg>
          <div class="legend">
            <i class="grip"></i>
            <span v-for="l in legends.rsi" :key="l.t" :style="{ color: l.c }">{{ l.t }}</span>
          </div>
          <div class="mini"><button aria-label="확대"><svg viewBox="0 0 8 8"><path d="M2.500 3h3v2.500h-3z" stroke="#bbb" /></svg></button><button class="x" aria-label="닫기"><svg viewBox="0 0 8 8"><path d="M2 2l4 4M6 2L2 6" stroke="#fff" /></svg></button></div>
        </div>

        <footer class="foot">
          <button class="arrow" aria-label="왼쪽"><svg viewBox="0 0 8 8"><path class="kf" d="M6 1v6L3 4z" /></svg></button>
          <div class="track"></div>
          <div class="thumb"></div>
          <button class="arrow" aria-label="오른쪽"><svg viewBox="0 0 8 8"><path class="kf" d="M3 1v6l3-3z" /></svg></button>
          <div class="range"><input v-model="zoomLevel" type="range" aria-label="배율" /></div>
          <button v-for="f in footIcons" :key="f.name" class="fi" :aria-label="f.name">
            <svg viewBox="0 0 14 14"><path v-for="s in f.shapes" :key="s.d" :d="s.d" :stroke="s.s ?? 'none'" :fill="s.f ?? 'none'" :stroke-width="s.w ?? 0" /></svg>
          </button>
        </footer>
      </section>

      <nav class="tools">
        <button v-for="t in tools" :key="t.name" :aria-label="t.name">
          <svg viewBox="0 0 22 22">
            <path v-for="s in t.shapes" :key="s.d" :d="s.d" :stroke="s.s ?? 'none'" :fill="s.f ?? 'none'" :stroke-width="s.w" />
            <text v-if="t.text" x="10" :y="t.ty" text-anchor="middle" :font-size="t.ts" :fill="t.tc ?? INK">{{ t.text }}</text>
            <path d="M21 17v4h-4z" fill="#999" />
          </svg>
        </button>
      </nav>
    </main>
  </div>
</template>

<style>
html, body { background: #fff; }
</style>

<style scoped>
.window {
  box-sizing: border-box;
  min-height: 100vh;
  display: flex;
  flex-direction: column;
  border: 1px solid #000;
  background: #fff;
  color: #000;
  font: 12px/16px "Noto Sans CJK KR", sans-serif;
  font-feature-settings: "hwid";
}
.window *, .window *::before, .window *::after { box-sizing: border-box; }
button, input, select {
  font: inherit;
  font-feature-settings: inherit;
  color: inherit;
  margin: 0;
  padding: 0;
  border: 0;
  border-radius: 0;
  background: none;
}
svg { display: block; fill: none; }
.k { stroke: #222; stroke-width: 1; }
.k2 { stroke: #222; stroke-width: 2; }
.kf { fill: #222; }
.g { stroke: #777; }
.gear { stroke: #222; stroke-width: 2; stroke-dasharray: 2 3; }

.titlebar {
  height: 22px;
  display: flex;
  align-items: center;
  padding: 0 3px;
  background: #588fd0;
  color: #fff;
}
.badge {
  width: 16px;
  height: 16px;
  background: #333;
  color: #fc3;
  font: bold 13px/16px "Noto Sans CJK KR", sans-serif;
  text-align: center;
}
h1 { margin: 0 0 0 4px; font-size: 14px; line-height: 20px; font-weight: 500; }
.title-icons { margin-left: auto; display: flex; align-items: center; gap: 6px; }
.title-icons button, .title-icons svg { width: 12px; height: 12px; }
.title-icons path { stroke: #fff; stroke-width: 1; }
.title-icons .thick { stroke-width: 2; }
.split { width: 1px; height: 14px; margin: 0 3px; background: #4a7dbc; }

.bar { display: flex; height: 20px; padding: 0 8px 0 7px; white-space: nowrap; }
.first { margin-top: 7px; }
.second { margin-top: 3px; color: #444; }
.sq {
  width: 20px;
  height: 20px;
  border: 1px solid #555;
  background: #fff;
  color: #444;
  text-align: center;
  display: flex;
  align-items: center;
  justify-content: center;
}
.sq svg { width: 16px; height: 16px; }
.first > .sq { margin-right: 1px; }
.sq.on { background: #5a5a5a; color: #fff; font-weight: bold; }
select {
  height: 20px;
  border: 1px solid #c4c4c4;
  padding: 0 4px;
  font-size: 13px;
  line-height: 16px;
  appearance: none;
  background: #fff url("data:image/svg+xml,%3Csvg xmlns='http://www.w3.org/2000/svg' width='8' height='6'%3E%3Cpath d='M0.500 1l3.500 3.500L7.500 1' fill='none' stroke='%23444' stroke-width='1.500'/%3E%3C/svg%3E") no-repeat right 5px center;
}
.w-kind { width: 53px; margin-right: 4px; }
.w-change { width: 72px; margin-right: 4px; }
.w-code { width: 64px; font-size: 12px; }
.w-krx { width: 53px; margin: 0 9px; font-size: 12px; color: #777; }
.w-acct { width: 126px; font-size: 12px; margin-right: 8px; color: #000; }
.joined { display: flex; }
.joined button { width: 19px; border: 1px solid #c4c4c4; border-left: 0; display: flex; align-items: center; justify-content: center; }
.joined button.narrow { width: 14px; }
.joined svg { width: 14px; height: 14px; }
.hundred { width: 18px; margin-left: 4px; background: #777; color: #fff; display: flex; flex-direction: column; align-items: center; }
.hundred b { font: 9px/10px "Liberation Sans", sans-serif; }
.stock { width: 132px; margin-right: 4px; border: 1px solid #ddd; border-left: 0; display: flex; align-items: center; gap: 2px; padding-left: 6px; font-size: 13px; position: relative; }
.stock svg { width: 10px; height: 16px; }
.stock i { position: absolute; right: 2px; bottom: 2px; width: 6px; height: 6px; border: 1px solid #888; border-left-color: #ddd; border-top-color: #ddd; }
.gapped { display: flex; gap: 2px; }
.gapped .sq { font-size: 13px; }
.mins .sq { font-size: 12px; padding: 0; }
.combo { display: flex; width: 43px; margin: 0 1px 0 2px; border: 1px solid #777; }
.combo input { width: 26px; padding-left: 3px; }
.combo button { width: 15px; border-left: 1px solid #777; }
.spin { display: flex; width: 45px; margin-left: 10px; border: 1px solid #c4c4c4; }
.spin input { width: 31px; text-align: right; padding-right: 4px; }
.spin span { width: 12px; border-left: 1px solid #c4c4c4; }
.spin svg { width: 11px; height: 18px; }
.slash { width: 16px; text-align: center; font-size: 14px; line-height: 20px; }
.total { width: 32px; border: 1px solid #c4c4c4; padding-left: 3px; }
.trio { display: flex; gap: 3px; margin-left: 2px; }
.far { margin-left: auto; display: flex; gap: 2px; }
.slim { width: 7px; border: 1px solid #555; }
.u { width: 26px; border: 1px solid #555; font: bold 12px/18px "Liberation Sans", sans-serif; }

.date { display: flex; align-items: center; width: 86px; border: 1px solid #c4c4c4; padding-left: 3px; color: #000; }
.date input { width: 64px; }
.date svg { width: 14px; height: 14px; }
.txt { width: 46px; height: 20px; border: 1px solid #666; background: #fff; font-size: 13px; line-height: 16px; text-align: center; }
.txt.dark { margin: 0 1px; }
.layout { width: 58px; border: 1px solid #666; display: flex; align-items: center; justify-content: space-between; padding: 0 2px 0 3px; }
.layout svg { width: 16px; height: 14px; }
.one { margin: 0 10px 0 1px; font: bold 9px/16px "Liberation Sans", sans-serif; }
.syncs, .pair { display: flex; gap: 1px; }
.txt.off { border-color: #d8d8d8; background: #eee; color: #aaa; }
.won { font-size: 14px; color: #000; }
.pair + .pair { margin-left: 10px; }
.check { display: flex; align-items: center; gap: 4px; font-size: 13px; margin-right: 9px; }
.check input { appearance: none; width: 12px; height: 12px; border: 1px solid #888; background: #ccc; box-shadow: inset 0 0 0 1px #eee; }
.day { margin-left: 1px; margin-right: 10px; }
.orders { margin-right: 3px; }
.w-acct + .check { margin-left: -5px; margin-right: 10px; }
.txt.pale { border-color: #666; color: #aaa; }
.txt.buy { background: #fa3c3c; color: #fff; border-color: #c44; }
.txt.sell { background: #3582e6; color: #fff; border-color: #2b6cc4; }

main { flex: 1; display: flex; padding-left: 7px; margin-top: 3px; }
.side { width: 185px; display: flex; flex-direction: column; margin-right: 2px; padding-bottom: 6px; }
.tabs { display: flex; height: 20px; padding: 2px 0 0 2px; }
.tabs button { width: 48px; background: #eee; border: 1px solid #ddd; border-bottom: 0; font-size: 13px; line-height: 14px; color: #777; }
.tabs .cur { width: 49px; background: #fff; color: #000; font-weight: 500; margin-top: -2px; position: relative; margin-bottom: -1px; }
.side-body { flex: 1; border: 1px solid #d4d4d4; display: flex; flex-direction: column; padding: 5px 1px 2px 2px; }
.find { display: flex; gap: 2px; margin-bottom: 4px; }
.find input { width: 96px; height: 20px; border: 1px solid #c4c4c4; margin-right: 1px; }
h2 { margin: 0; height: 20px; display: flex; align-items: center; gap: 8px; padding: 0 0 2px 4px; background: #f5f5f5; border-bottom: 1px solid #bbb; font-size: 13px; line-height: 18px; font-weight: 700; }
h2 svg, .groups svg { width: 13px; height: 11px; }
ul { list-style: none; margin: 0; padding: 0; }
a { color: inherit; text-decoration: none; }
.tree li { display: flex; align-items: center; height: 18px; padding-left: 25px; gap: 9px; font-size: 13px; position: relative; font-feature-settings: normal; }
.tree svg { width: 10px; height: 12px; }
.tree li::before { content: ""; position: absolute; left: 9px; top: 0; bottom: 0; border-left: 1px dotted #777; }
.tree li:first-child::before { top: 9px; }
.tree li:last-child::before { bottom: 9px; }
.tree li::after { content: ""; position: absolute; left: 9px; top: 9px; width: 11px; border-top: 1px dotted #777; }
.groups { margin-top: auto; }
.groups li { display: flex; align-items: center; gap: 8px; height: 21px; padding-left: 4px; background: #f5f5f5; border-bottom: 1px solid #bbb; font-size: 13px; line-height: 18px; }
.fav { display: flex; align-items: center; gap: 2px; height: 22px; padding-left: 5px; font-size: 13px; }
.fav span { margin-right: auto; }
.fav .txt { width: 43px; }

.chart { flex: 1; min-width: 0; border: 2px solid #8a8e96; border-top-width: 1px; border-bottom-width: 1px; display: flex; flex-direction: column; }
.quote { display: flex; align-items: center; height: 21px; padding: 0 2px 2px 6px; gap: 10px; background: #ffffd2; border-bottom: 1px solid #bbb; font-size: 14px; line-height: 18px; white-space: pre; }
.quote b { font-weight: 700; }
.quote .red { color: #b80c0c; }
.quote .unit { margin-left: auto; margin-right: -8px; }
.frame-buttons { display: flex; gap: 1px; padding-top: 2px; }
.quote button { width: 15px; height: 15px; border: 1px solid #333; background: #fff; }
.quote svg { width: 13px; height: 13px; }
.panel { position: relative; }
.plot { width: 100%; height: auto; font-size: 12px; shape-rendering: crispEdges; }
.plot text { fill: #000; }
.plot text[fill="#fff"] { fill: #fff; }
.plot text[fill="#c62f35"] { fill: #c62f35; }
.plot text[fill="#1473d2"] { fill: #1473d2; }
.grid path { stroke: #c0c0c0; stroke-dasharray: 1 3; }
.session { stroke: #c02020; stroke-dasharray: 1 2; }
.legend { position: absolute; left: 3px; top: 1px; display: flex; align-items: center; height: 16px; gap: 6px; white-space: nowrap; }
.grip { width: 10px; height: 6px; background: #bbb; align-self: flex-start; margin: 1px -2px 0 0; }
.legend span { display: flex; align-items: center; gap: 2px; }
.legend span.wide { font-size: 13px; }
.legend span::before { content: ""; width: 4px; height: 8px; background: currentColor; }
.ho { position: absolute; left: 1px; top: 15px; width: 17px; height: 17px; background: #5080b4; border: 1px solid #466a90; color: #fff; font-size: 13px; line-height: 14px; text-align: center; }
.mini { position: absolute; right: 69px; top: 2px; display: flex; gap: 2px; }
.mini button { width: 8px; height: 8px; border: 1px solid #bbb; }
.mini .x { background: #bbb; }
.mini svg { width: 8px; height: 8px; margin: -1px; }

.foot { display: flex; align-items: center; height: 16px; background: #eee; padding-left: 1px; }
.arrow { width: 16px; height: 15px; background: #eee; border: 1px solid #fff; border-right-color: #777; border-bottom-color: #777; display: flex; align-items: center; justify-content: center; }
.arrow svg { width: 8px; height: 8px; }
.track { flex: 622 1 0; height: 15px; background: #f6f6f6; }
.thumb { flex: 555 1 0; height: 15px; background: #eee; border: 1px solid #fff; border-right-color: #777; border-bottom-color: #999; }
.range { width: 70px; height: 16px; padding: 0 5px; background: #fff; }
.range input { display: block; appearance: none; width: 60px; height: 16px; background: repeating-linear-gradient(90deg, #444 0 1px, transparent 1px 5px) 0 12px / 60px 4px no-repeat, linear-gradient(#777, #777) 0 4px / 60px 1px no-repeat; }
.range input::-webkit-slider-thumb { appearance: none; width: 3px; height: 10px; margin-top: -6px; background: #888; }
.fi { width: 16px; height: 16px; display: flex; align-items: center; justify-content: center; }
.fi svg { width: 13px; height: 13px; }

.tools { width: 38px; display: flex; flex-direction: column; align-items: flex-start; padding-left: 7px; margin-top: -20px; }
.tools button, .tools svg { width: 22px; height: 22px; }
.tools text { font-family: "Noto Sans CJK KR", sans-serif; font-weight: 500; }
</style>
